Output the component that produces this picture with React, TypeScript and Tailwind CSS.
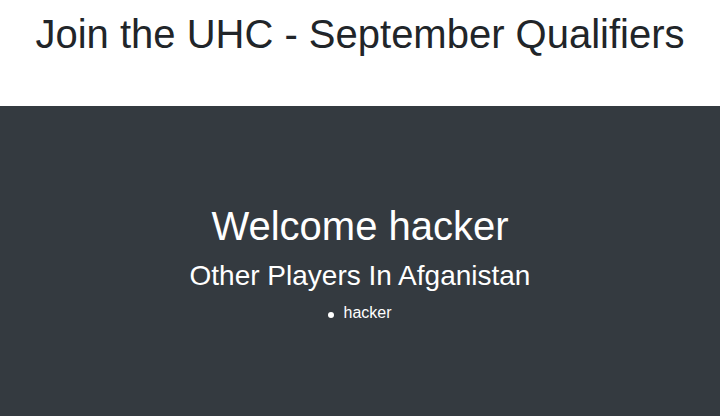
export default function App() {
  return (
    <div className="flex h-[416px] w-[720px] flex-col font-['Liberation_Sans',Arial,sans-serif]">
      <header className="h-[106px] shrink-0 bg-white pt-[10px]">
        <h1 className="text-center text-[40px] leading-[48px] text-[#212529]">
          Join the UHC - September Qualifiers
        </h1>
      </header>
      <main className="flex-1 bg-[#343a40] pt-[96px] text-center text-white">
        <h1 className="text-[40px] leading-[48px]">Welcome hacker</h1>
        <h3 className="mt-[9px] text-[28px] leading-[34px]">
          Other Players In Afganistan
        </h3>
        <ul className="mt-[8px] flex flex-col items-center text-[16px] leading-[24px]">
          <li className="flex items-center gap-[9px]">
            <span className="mt-[3px] size-[6px] rounded-full bg-white" />
            <span>hacker</span>
          </li>
        </ul>
      </main>
    </div>
  )
}
